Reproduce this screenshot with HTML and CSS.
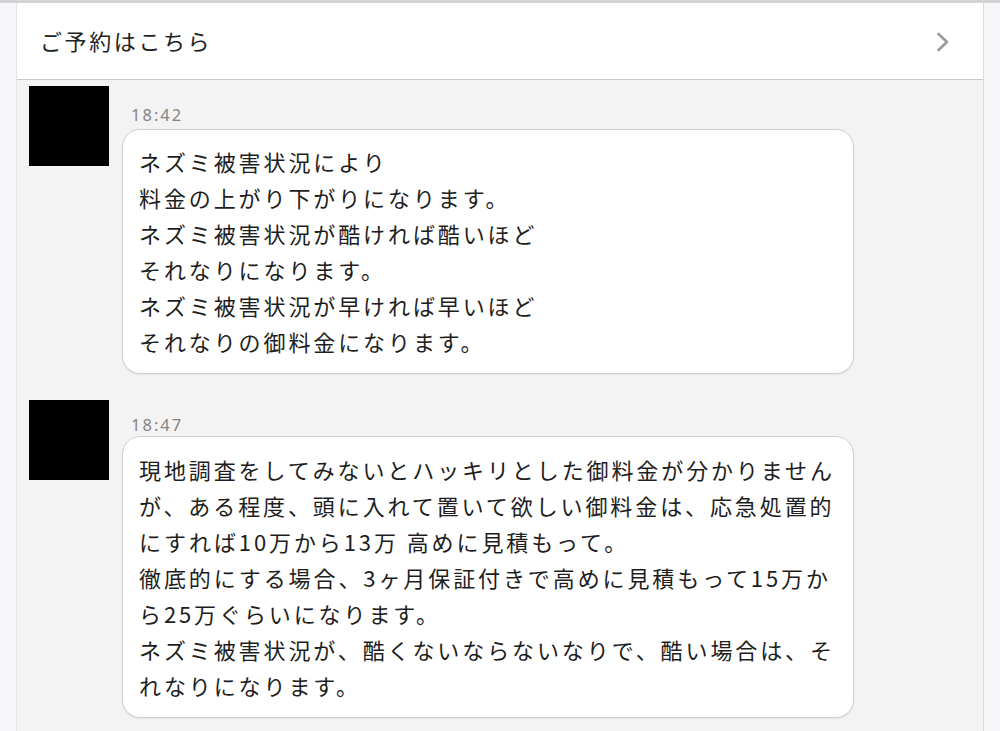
FILE: index.html
```html
<!DOCTYPE html>
<html lang="ja">
<head>
<meta charset="utf-8">
<title>ご予約はこちら</title>
<link rel="stylesheet" href="styles.css">
</head>
<body>
<div class="topbar"></div>
<div class="page">
  <div class="header">
    <span class="header-title">ご予約はこちら</span>
    <svg class="chevron" width="14" height="20" viewBox="0 0 14 20"><polyline points="2.5,2 11,10 2.5,18" fill="none" stroke="#9a9a9a" stroke-width="2.6" stroke-linecap="round" stroke-linejoin="round"/></svg>
  </div>
  <div class="chat">
    <div class="msg msg-first">
      <div class="avatar"></div>
      <div class="body">
        <div class="time">18:42</div>
        <div class="bubble bubble-a">ネズミ被害状況により<br>料金の上がり下がりになります。<br>ネズミ被害状況が酷ければ酷いほど<br>それなりになります。<br>ネズミ被害状況が早ければ早いほど<br>それなりの御料金になります。</div>
      </div>
    </div>
    <div class="msg msg-second">
      <div class="avatar"></div>
      <div class="body body-second">
        <div class="time">18:47</div>
        <div class="bubble bubble-b">現地調査をしてみないとハッキリとした御料金が分かりません<br>が、ある程度、頭に入れて置いて欲しい御料金は、応急処置的<br>にすれば10万から13万 高めに見積もって。<br>徹底的にする場合、3ヶ月保証付きで高めに見積もって15万か<br>ら25万ぐらいになります。<br>ネズミ被害状況が、酷くないならないなりで、酷い場合は、そ<br>れなりになります。</div>
      </div>
    </div>
  </div>
</div>
</body>
</html>
```
FILE: styles.css
```css
html, body {
  margin: 0;
  padding: 0;
}
body {
  background: #f7f7fa;
  font-family: "Noto Sans CJK JP", "Noto Sans", sans-serif;
  color: #222;
  height: 731px;
  overflow: hidden;
}
.topbar {
  height: 3px;
  background: #d3d3d5;
}
.page {
  margin-left: 16px;
  width: 968px;
  border-left: 1px solid #e3e3e6;
  border-right: 1px solid #dadadc;
  background: #f3f3f3;
  height: 728px;
  box-sizing: border-box;
}
.header {
  height: 77px;
  box-sizing: border-box;
  background: #fff;
  border-bottom: 1px solid #c9c9c9;
  display: flex;
  align-items: center;
  justify-content: space-between;
  padding: 0 33px 0 23px;
}
.header-title {
  font-size: 22px;
  letter-spacing: 2.6px;
  color: #222;
  line-height: 30px;
  margin-top: -2px;
}
.chevron {
  display: block;
  margin-top: 2px;
}
.chat {
  padding: 0 0 0 12px;
}
.msg {
  display: flex;
  align-items: flex-start;
}
.msg-first {
  padding-top: 6px;
}
.msg-second {
  padding-top: 26px;
}
.avatar {
  width: 80px;
  height: 80px;
  background: #000;
  flex: none;
}
.body {
  margin-left: 13px;
  padding-top: 18px;
}
.body-second {
  padding-top: 14px;
}
.time {
  font-family: "Noto Sans", sans-serif;
  font-size: 16.5px;
  letter-spacing: 2px;
  color: #858585;
  line-height: 22px;
  padding-left: 9px;
}
.bubble {
  width: 732px;
  box-sizing: border-box;
  background: #fff;
  border: 1px solid #cfcfcf;
  border-radius: 18px;
  box-shadow: 0 1px 1px rgba(0, 0, 0, 0.06);
  font-size: 22px;
  letter-spacing: 2.9px;
  line-height: 36px;
  padding: 13px 8px 13px 16px;
  color: #1e1e1e;
  white-space: nowrap;
}
.bubble-a {
  margin-top: 3px;
  padding-bottom: 14px;
}
.bubble-b {
  margin-top: 0;
  padding-top: 14px;
  padding-bottom: 14px;
}
```
